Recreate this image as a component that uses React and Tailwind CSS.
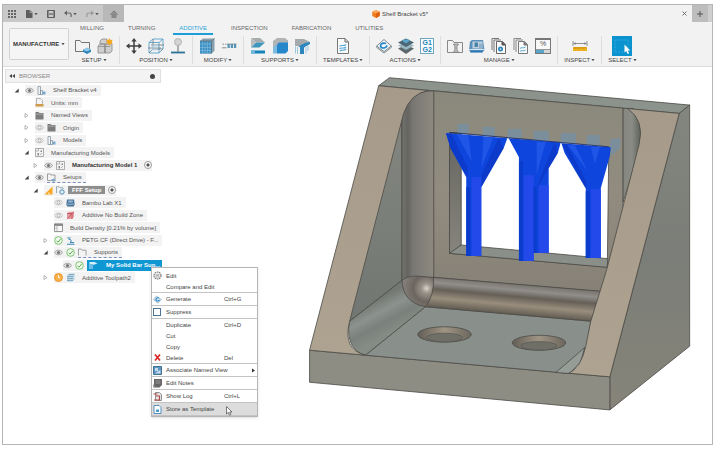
import { useState } from 'react';

const BLUE = '#2a86bd';
const GRAY = '#737373';

/* ---------- small helpers ---------- */

const Svg = ({ size = 'size-4', box = 16, children }) => (
  <svg viewBox={`0 0 ${box} ${box}`} className={`${size} shrink-0`} fill="none" aria-hidden="true">
    {children}
  </svg>
);

const Caret = ({ className = '' }) => (
  <svg viewBox="0 0 4 4" className={`size-1 shrink-0 ${className}`} aria-hidden="true">
    <path d="M0.4 1h3.2L2 3.2z" fill="#555" />
  </svg>
);

/* ---------- toolbar icons ---------- */

const toolIcons = {
  setup: (
    <>
      <path d="M.5 13.500V2.500h4.500l1.500 2h8v9z" stroke={GRAY} />
      <path d="M8 11.500l4-2 4 2-4 2.200z" fill="#8cc6ea" />
      <path d="M8 11.500v2.200l4 2.300 4-2.300v-2.200l-4 2.200z" fill={BLUE} />
    </>
  ),
  component: (
    <>
      <path d="M1 8l2-2h5v9H1zM8 8l2-2h5v7l-2 2H8zM3 3l2-2h5v5H3z" fill="#cfcfcf" stroke="#8c8c8c" strokeWidth=".8" />
      <path d="M1 8.500h12M8 6v9" stroke="#8c8c8c" strokeWidth=".8" />
      <path d="M12.500 0l1 2 2.200-.3-1 2 1.200 1.800-2.200.2-1.200 2-1.200-2-2.200-.2 1.200-1.800-1-2 2.200.3z" fill="#f6a81c" />
    </>
  ),
  move: (
    <>
      <path d="M8 2v12M2 8h12" stroke="#3f3f3f" strokeWidth="1.500" />
      <path d="M8 0l2.700 3.500H5.300zM8 16l2.700-3.500H5.300zM0 8l3.500-2.700v5.400zM16 8l-3.500-2.700v5.400z" fill="#3f3f3f" />
    </>
  ),
  box: (
    <>
      <path d="M1 4.500L5 1h10v10l-4 4H1zM1 4.500h10V15M11 4.500L15 1" stroke="#5aa2cc" strokeWidth=".9" />
      <path d="M5 1v10h10M5 11l-4 4M0 10h13M3 7h13" stroke="#6b7880" strokeWidth=".8" />
      <path d="M3.500 6.500h6v6h-6z" fill="#b5d6e8" fillOpacity=".6" />
    </>
  ),
  probe: (
    <>
      <circle cx="8" cy="4" r="3.500" fill="#d4d4d4" stroke="#a5a5a5" strokeWidth=".7" />
      <path d="M8 7.500V14" stroke="#888" strokeWidth="1.300" />
      <path d="M1 14.500h14" stroke="#2f7396" strokeWidth="1.800" />
    </>
  ),
  lattice: (
    <>
      <path d="M1 3l3-2.500h11.500V13l-3 2.500H1z" fill="#88a0ae" />
      <path d="M1 3h11.500v12.500H1z" fill="#3d8fc4" />
      <path d="M3.500 3v12.500M6 3v12.500M8.500 3v12.500M11 3v12.500M1 6h11.500M1 9.500h11.500M1 12.500h11.500" stroke="#8fc4e3" strokeWidth=".5" />
      <path d="M12.500 3v12.500M12.500 3l3-2.500M1 3h11.500" stroke="#5b6f7b" strokeWidth=".8" />
    </>
  ),
  modify: (
    <>
      <path d="M1.500 6.200h4" stroke="#8d8d8d" strokeDasharray="1.500 1" />
      <path d="M1 9.800h4.500" stroke="#8d8d8d" />
      <path d="M6.500 6h2.300v4H6.500zM9.700 6H12v4H9.700zM12.900 6h2.300v4h-2.300z" fill="#5794b8" />
      <path d="M6 6h9.500" stroke="#688" strokeWidth=".7" />
    </>
  ),
  support1: (
    <>
      <path d="M1 0h9l5 4.500H6z" fill="#a7adaf" />
      <path d="M6 4.500h9L9.500 9.500H1z" fill="#3f96bd" />
      <path d="M1 9.500V0l5 4.500z" fill="#b9bdbe" />
      <path d="M1 12.500h14v3H1z" fill="#1484bd" />
      <path d="M1 12.500h4v3H1z" fill="#6fb7dc" />
    </>
  ),
  support2: (
    <>
      <path d="M1 3l4-3h8l3 2.500V6L5.500 8 1 11z" fill="#b1b4b5" />
      <path d="M5 6.500L7 4.500h9V13l-2.500 2.500H5z" fill="#2688cb" />
      <path d="M1 9l4-2.500v9H1z" fill="#7eb9df" />
    </>
  ),
  support3: (
    <>
      <path d="M1 1h9l6 3-5 4H1z" fill="#a4a9ab" />
      <path d="M4 8.500L11 5l5-1v2l-6 3.500V16H6V9z" fill="#2a86bd" />
      <path d="M1.500 8.500v7M3.500 9v7M12 9v6.500M14 8v5" stroke="#9cc7dd" />
    </>
  ),
  template: (
    <>
      <path d="M2.500.5h7.500L13.500 4v11.500h-11z" fill="#fafafa" stroke="#777" />
      <path d="M10 .5V4h3.500" stroke="#666" />
      <path d="M4.500 8.500c2-2.500 3.500.5 6.500-2M4.500 11c2-2.500 3.500.5 6.500-2M5 13c2-2 3.500.5 6-2" stroke="#51a8d8" strokeWidth="1.100" />
    </>
  ),
  generate: (
    <>
      <path d="M.7 8L8 1.500 15.300 8 8 13.500z" fill="#f3f7fa" stroke="#7d8a92" />
      <path d="M.7 8v1.500L8 15l7.300-5.500V8" stroke="#7d8a92" />
      <path d="M10 5.500c-4-1.500-7 2-4.500 4 2 1.200 5 0 5.500-2" stroke="#2386d0" strokeWidth="1.700" />
    </>
  ),
  simulate: (
    <>
      <path d="M0 10.500L8 7l8 3.500L8 16z" fill="#5d686d" />
      <path d="M0 7.500L8 4l8 3.500L8 12z" fill="#9ab6c3" />
      <path d="M0 4.500L8 .5l8 4L8 9z" fill="#4b6774" />
      <path d="M5 3.500l3 2 3-2v-2H5z" fill="#59a6cd" />
    </>
  ),
  manageTool: (
    <>
      <path d="M.5 14.500v-12h5l1.500 2h8.500v10z" stroke="#888" />
      <path d="M6.500 6h5L10 8.500v3l1.500 3h-5l1.300-3v-3z" fill="#b9bcbd" stroke="#777" strokeWidth=".7" />
    </>
  ),
  machine: (
    <>
      <path d="M1 3.500L3 2h11l1.500 10-2 2.500H1.500L0 12z" fill="#5b90bd" />
      <path d="M3.500 3.500h10v7h-10z" fill="#c3d2de" />
      <path d="M5.500 4.500h3.500V9H5.500z" fill="#4a83a8" />
      <path d="M10 5.500h3V10h-3z" fill="#8fb0c9" />
      <path d="M0 11.500h15.500" stroke="#dbe6ee" />
      <path d="M1.500 13.500h12" stroke="#2b78b8" strokeWidth="1.600" />
    </>
  ),
  docPost: (
    <>
      <path d="M1 12V.5h7M3 14V2h7" stroke="#777" />
      <path d="M5.500 3.500h6l3 3v9h-9z" fill="#fafafa" stroke="#666" />
      <path d="M11 3.500v3.500h3.500" fill="#555" stroke="#555" />
      <circle cx="9.500" cy="11" r="2.500" fill={BLUE} />
      <circle cx="9.500" cy="11" r=".8" fill="#fff" />
    </>
  ),
  docTemplate: (
    <>
      <path d="M1 12V.5h7M3 14V2h7" stroke="#888" />
      <path d="M5.500 3.500h6l3 3v9h-9z" fill="#fafafa" stroke="#777" />
      <path d="M11 3.500v3.500h3.500" fill="#777" stroke="#777" />
      <path d="M7 10.500c1.500-2 3 .5 5.500-1.500M7 13.500c1.500-2 3 .5 5.500-1.500" stroke="#51a8d8" />
    </>
  ),
  inspect: (
    <>
      <path d="M1 3v5M15 3v5M2 5.500h12" stroke="#777" strokeWidth=".8" />
      <path d="M1.500 5.500l2-1.300v2.600zM14.500 5.500l-2-1.300v2.600z" fill="#666" />
      <path d="M1 9h14v4H1z" fill="#eeb01f" />
      <path d="M3 9v2M5 9v1.500M7 9v2M9 9v1.500M11 9v2M13 9v1.500" stroke="#a77400" strokeWidth=".6" />
    </>
  ),
};

const Tool = ({ name }) => {
  if (name === 'gcode') {
    return (
      <button aria-label="G-code" className="flex h-4 w-[14px] flex-col items-center justify-center border border-[#70a5c0] bg-[#f7fbfd] text-[7px] font-bold leading-[7px] text-[#2386b9]">
        <span>G1</span>
        <span>G2</span>
      </button>
    );
  }
  if (name === 'percent') {
    return (
      <button aria-label="Feed settings" className="flex h-4 w-4 flex-col items-center border border-t-2 border-[#777] bg-[#f8f8f8] text-[7px] leading-[8px] text-[#555]">
        <span className="flex-1">%</span>
        <span className="h-[4px] w-full border-t border-[#999] bg-linear-to-r from-[#57a4cc] from-60% to-[#d5d5d5] to-60%" />
      </button>
    );
  }
  if (name === 'select') {
    return (
      <button aria-label="Select" className="h-5 w-5">
        <svg viewBox="0 0 20 20" className="size-5">
          <path d="M0 0h20v20H0z" fill="#0b93d0" />
          <path d="M3 4h13M3 4v12M16 4v8M3 16h8" stroke="#3eaedd" strokeWidth=".7" strokeDasharray="2 1" fill="none" />
          <path d="M12.500 8.500v8l1.800-1.600 1.300 3 1.500-.7-1.300-2.800h2.400z" fill="#fff" />
        </svg>
      </button>
    );
  }
  return (
    <button aria-label={name} className="size-4">
      <Svg>{toolIcons[name]}</Svg>
    </button>
  );
};

const groups = [
  { label: 'SETUP', tools: ['setup', 'component'] },
  { label: 'POSITION', tools: ['move', 'box', 'probe'] },
  { label: 'MODIFY', tools: ['lattice', 'modify'] },
  { label: 'SUPPORTS', tools: ['support1', 'support2', 'support3'] },
  { label: 'TEMPLATES', tools: ['template'] },
  { label: 'ACTIONS', tools: ['generate', 'simulate', 'gcode'] },
  { label: 'MANAGE', tools: ['manageTool', 'machine', 'docPost', 'docTemplate', 'percent'] },
  { label: 'INSPECT', tools: ['inspect'] },
  { label: 'SELECT', tools: ['select'] },
];

const tabs = ['MILLING', 'TURNING', 'ADDITIVE', 'INSPECTION', 'FABRICATION', 'UTILITIES'];

/* ---------- title bar ---------- */

const TitleBar = () => (
  <header className="flex h-[17px] items-stretch bg-[#f2f2f2]">
    <div className="flex items-center gap-[9px] bg-[#c9c9c9] pl-[5px] pr-[4px]">
      <button aria-label="Data panel">
        <Svg size="size-2" box={8}>
          <path d="M0 0h2v2H0zM3 0h2v2H3zM6 0h2v2H6zM0 3h2v2H0zM3 3h2v2H3zM6 3h2v2H6zM0 6h2v2H0zM3 6h2v2H3zM6 6h2v2H6z" fill="#666" />
        </Svg>
      </button>
      <button aria-label="File" className="flex items-center gap-px">
        <Svg size="size-2" box={8}>
          <path d="M1 0h4l2.500 2.500V8H1z" fill="#5e5e5e" />
          <path d="M5 0v2.500h2.500" stroke="#c9c9c9" strokeWidth=".6" />
        </Svg>
        <Caret />
      </button>
      <button aria-label="Save">
        <Svg size="size-2" box={8}>
          <path d="M.5.5h7v7h-7z" fill="#8a8a8a" stroke="#5e5e5e" />
          <path d="M2 1h4v2H2zM2 5h4v2H2z" fill="#ccc" />
        </Svg>
      </button>
      <button aria-label="Undo" className="flex items-center gap-px">
        <Svg size="size-2" box={8}>
          <path d="M1.500 3H5c2 0 2.500 1.500 2 4" stroke="#666" strokeWidth="1.200" />
          <path d="M0 3l3-2.500v5z" fill="#666" />
        </Svg>
        <Caret />
      </button>
      <button aria-label="Redo" className="flex items-center gap-px">
        <Svg size="size-2" box={8}>
          <path d="M6.500 3H3C1 3 .5 4.500 1 7" stroke="#999" strokeWidth="1.200" />
          <path d="M8 3L5 .5v5z" fill="#999" />
        </Svg>
        <Caret />
      </button>
    </div>
    <button aria-label="Home" className="flex w-[21px] items-center justify-center bg-[#b8b8b8]">
      <Svg size="size-2" box={8}>
        <path d="M0 4.500L4 .5l4 4-.7.6L4 2 .7 5.100z" fill="#777" />
        <path d="M1.500 4.500L4 2.200l2.500 2.300V8h-5z" fill="#888" />
      </Svg>
    </button>
    <div className="flex flex-1 items-center justify-center gap-[2px] text-[#444]">
      <Svg size="size-2" box={8}>
        <path d="M4 0l3.700 1.800v4.300L4 8 .3 6.100V1.800z" fill="#f07a1a" />
        <path d="M4 0l3.700 1.800L4 3.600.3 1.800z" fill="#ffab5c" />
        <path d="M4 3.600l3.700-1.800v4.300L4 8z" fill="#e0600f" />
      </Svg>
      <h1>Shelf Bracket v5*</h1>
    </div>
    <button aria-label="Close" className="flex w-4 items-center justify-center">
      <Svg size="size-[5px]" box={5}>
        <path d="M.5.5l4 4M4.500.5l-4 4" stroke="#555" strokeWidth=".8" />
      </Svg>
    </button>
    <button aria-label="New tab" className="flex w-4 items-center justify-center bg-[#bdbdbd]">
      <Svg size="size-2" box={8}>
        <path d="M4 1v6M1 4h6" stroke="#555" />
      </Svg>
    </button>
    <div className="w-[4px] bg-[#cfcfcf]" />
  </header>
);

const Ribbon = () => {
  const [active, setActive] = useState('ADDITIVE');

  return (
    <div className="flex border-b border-[#dcdcdc] bg-[#f2f2f2]">
      <label className="relative my-[6px] ml-[6px] flex w-[60px] shrink-0 items-center rounded-[2px] border border-[#d2d2d2] bg-[#f5f5f5]">
        <select aria-label="Workspace" className="h-full w-full appearance-none pl-[3px] font-bold text-[#333]">
          <option>MANUFACTURE</option>
          <option>DESIGN</option>
        </select>
        <Caret className="pointer-events-none absolute right-[3px]" />
      </label>
      <div className="min-w-0 flex-1">
        <nav className="flex h-[13px] gap-3 pl-[5px]">
          {tabs.map((tab) => (
            <button
              key={tab}
              onClick={() => setActive(tab)}
              className={`border-b-2 px-[6px] ${active === tab ? 'border-[#1b9fd8] text-[#2aa5da]' : 'border-transparent text-[#666]'}`}
            >
              {tab}
            </button>
          ))}
        </nav>
        <div className="flex pb-[2px] pt-[1px]">
          {groups.map((group) => (
            <section key={group.label} className="flex flex-col items-center border-r border-[#dedede] px-[6px] last:border-0">
              <div className="flex h-5 items-center gap-[6px]">
                {group.tools.map((tool) => (
                  <Tool key={tool} name={tool} />
                ))}
              </div>
              <button className="flex h-2 items-center gap-px text-[#444]">
                {group.label}
                <Caret />
              </button>
            </section>
          ))}
        </div>
      </div>
    </div>
  );
};

/* ---------- browser tree ---------- */

const treeIcons = {
  eye: (
    <>
      <path d="M.3 4.500C2.500 1.500 6.500 1.500 8.700 4.500 6.500 7.500 2.500 7.500.3 4.500z" fill="#e6e6e6" stroke="#8a8a8a" strokeWidth=".8" />
      <circle cx="4.500" cy="4.500" r="1.600" fill="#777" />
    </>
  ),
  eyeOff: (
    <>
      <path d="M.3 4.500C2.500 1.500 6.500 1.500 8.700 4.500 6.500 7.500 2.500 7.500.3 4.500z" stroke="#b0b0b0" strokeWidth=".8" />
      <circle cx="4.500" cy="4.500" r="1.500" stroke="#a8a8a8" strokeWidth=".8" />
    </>
  ),
  part: (
    <>
      <path d="M1 .5h2.500v8H1zM3.500 4.500h2v4h-2z" fill="#eef3f7" stroke="#7d8b96" strokeWidth=".7" />
      <path d="M5.500 5.500h3v3h-3z" fill="#78a9cc" />
    </>
  ),
  units: (
    <>
      <path d="M1.500.5h4l2 2v4h-6z" fill="#f4f4f4" stroke="#999" strokeWidth=".7" />
      <path d="M.5 6h8v2.500h-8z" fill="#cf9a4c" />
    </>
  ),
  folder: (
    <>
      <path d="M.5 1h3l1 1h4v6.500h-8z" fill="#7c7c7c" />
      <path d="M.5 3.200h8" stroke="#b9b9b9" strokeWidth=".7" />
    </>
  ),
  mfg: (
    <>
      <path d="M.5.5h8v8h-8z" fill="#f4f4f4" stroke="#9a9a9a" strokeWidth=".8" />
      <path d="M2.500 5h1.500v2.500H2.500zM5.500 2.500h1.500V4H5.500z" fill="#888" />
      <path d="M.5 3h3V.5M5 7l2-2" stroke="#9a9a9a" strokeWidth=".7" />
    </>
  ),
  setupItem: (
    <>
      <path d="M.5 7.500V1h2.500l1 1h4v5.500z" stroke="#888" strokeWidth=".8" />
      <path d="M4.500 6.500l2-1 2 1v1.500l-2 .8-2-.8z" fill="#82aac8" />
    </>
  ),
  setupGear: (
    <>
      <path d="M.5 7V.800h2.500l1 1h3V3" stroke="#7e9aa8" strokeWidth=".8" />
      <circle cx="6" cy="6" r="2.200" stroke="#4f8fb5" strokeWidth="1" fill="#e2eef5" />
    </>
  ),
  warn: (
    <>
      <path d="M8.500.5v8h-8z" fill="#f7a823" />
      <path d="M4 6.500h2v2H4z" fill="#fbd38b" />
    </>
  ),
  printer: (
    <>
      <path d="M1 1.500h7l.7 5-1 2H1.300l-1-2z" fill="#44729c" />
      <path d="M2.200 2.500h4.600v2H2.200z" fill="#9bbbd5" />
      <path d="M.5 6.200h8" stroke="#c7d9e7" strokeWidth=".7" />
    </>
  ),
  zone: (
    <>
      <path d="M1 2.500L3 .800h5v5L6 8H1z" fill="#e39aa0" />
      <path d="M1 2.500h5V8M6 2.500l2-1.700M1.500 7.500l4-4.500" stroke="#c04550" strokeWidth=".8" />
    </>
  ),
  table: (
    <>
      <path d="M.5.800h8v7.700h-8z" fill="#f7f7f7" stroke="#808080" strokeWidth=".8" />
      <path d="M.5 2h8" stroke="#666" strokeWidth="1.400" />
      <path d="M3 2v6.500M.5 5H3" stroke="#999" strokeWidth=".6" />
    </>
  ),
  check: (
    <>
      <circle cx="4.500" cy="4.500" r="3.800" fill="#f3fbf1" stroke="#74bf66" strokeWidth=".9" />
      <path d="M2.500 4.700l1.500 1.500 2.800-3.400" stroke="#58ae49" strokeWidth="1" />
    </>
  ),
  print: (
    <>
      <path d="M1 1h4L4 3.500H2z" fill="#8ebad2" />
      <path d="M3 3.500c3 0 3 2 1 2.500M1 8.200h7.500M4 6.500h4" stroke="#3d87b5" strokeWidth="1" />
    </>
  ),
  openFolder: <path d="M.5 7.500V1h2.500l1 1.200h4v5.300" stroke="#8f8f8f" strokeWidth=".8" />,
  bar: (
    <>
      <path d="M.5 1h5l3 1.500L4 4v4H.5z" fill="#d8eefa" />
      <path d="M.5 3h3.500v5H.5z" fill="#6bbbe6" />
    </>
  ),
  clock: (
    <>
      <circle cx="4.500" cy="4.500" r="4" fill="#f7b04a" stroke="#ee9120" strokeWidth=".9" />
      <path d="M4.500 2.200v2.500h1.700" stroke="#fff" strokeWidth=".9" />
    </>
  ),
  toolpath: (
    <>
      <path d="M1 2.500L3 .5h5.500v6l-2 2H1z" fill="#b9d3e2" />
      <path d="M1 3.500h6M1 5.500h6M1 7.500h6M2.500 1.500h6" stroke="#6d9dba" strokeWidth=".7" />
    </>
  ),
};

const indents = ['pl-[11px]', 'pl-[21px]', 'pl-[30px]', 'pl-[40px]', 'pl-[49px]'];

const rows = [
  { level: 0, state: 'open', icons: ['eye', 'part'], label: 'Shelf Bracket v4' },
  { level: 1, icons: ['units'], label: 'Units: mm' },
  { level: 1, state: 'closed', icons: ['folder'], label: 'Named Views' },
  { level: 1, state: 'closed', icons: ['eyeOff', 'folder'], label: 'Origin' },
  { level: 1, state: 'closed', icons: ['eyeOff', 'part'], label: 'Models' },
  { level: 1, state: 'open', icons: ['mfg'], label: 'Manufacturing Models' },
  { level: 2, state: 'closed', icons: ['eye', 'mfg'], label: 'Manufacturing Model 1', kind: 'bold', radio: true },
  { level: 1, state: 'open', icons: ['eye', 'setupItem'], label: 'Setups', kind: 'dashed' },
  { level: 2, state: 'open', icons: ['warn', 'setupGear'], label: 'FFF Setup', kind: 'active', radio: true },
  { level: 3, icons: ['eyeOff', 'printer'], label: 'Bambu Lab X1' },
  { level: 3, icons: ['eyeOff', 'zone'], label: 'Additive No Build Zone' },
  { level: 3, icons: ['table'], label: 'Build Density [0.21% by volume]' },
  { level: 3, state: 'closed', icons: ['check', 'print'], label: 'PETG CF (Direct Drive) - F...' },
  { level: 3, state: 'open', icons: ['eye', 'check', 'openFolder'], label: 'Supports', kind: 'dashed' },
  { level: 4, icons: ['eye', 'check'], label: 'My Solid Bar Sup...', kind: 'selected' },
  { level: 3, state: 'closed', icons: ['clock', 'toolpath'], label: 'Additive Toolpath2' },
];

const labelStyles = {
  plain: 'px-1',
  bold: 'px-1 font-bold text-[#333]',
  dashed: 'px-1',
  active: 'bg-[#8e8e8e] px-1 font-bold text-white',
  selected: 'flex flex-1 items-center gap-2 self-stretch bg-[#0f97d4] px-[2px] font-bold text-white',
};

const TreeRow = ({ level, state, icons, label, kind = 'plain', radio }) => {
  const leading = kind === 'dashed' ? icons.slice(0, -1) : icons;

  return (
    <li className={`flex min-h-3 flex-1 items-center ${indents[level]}`}>
      <button aria-label={state ? `Toggle ${label}` : undefined} disabled={!state} className="w-[11px] shrink-0">
        {state && (
          <Svg size="size-[5px]" box={5}>
            {state === 'open' ? <path d="M4.700.5v4h-4z" fill="#444" /> : <path d="M1 .5l3 2-3 2z" stroke="#999" strokeWidth=".7" />}
          </Svg>
        )}
      </button>
      <div className={`flex h-[11px] items-center gap-[3px] bg-[#f3f3f3] ${kind === 'selected' ? 'flex-1' : ''}`}>
        {leading.map((icon) => (
          <Svg key={icon} size="size-[9px]" box={9}>{treeIcons[icon]}</Svg>
        ))}
        {kind === 'dashed' ? (
          <span className="flex h-[11px] items-center gap-[3px] border-b border-dashed border-[#7d8fc0]">
            <Svg size="size-[9px]" box={9}>{treeIcons[icons[icons.length - 1]]}</Svg>
            <span className={labelStyles.dashed}>{label}</span>
          </span>
        ) : (
          <span className={`whitespace-nowrap ${labelStyles[kind]}`}>
            {kind === 'selected' && <Svg size="size-[9px]" box={9}>{treeIcons.bar}</Svg>}
            {label}
          </span>
        )}
        {radio && (
          <input
            type="radio"
            name={label}
            aria-label={`Activate ${label}`}
            defaultChecked
            className="size-2 appearance-none rounded-full border border-[#999] bg-white checked:bg-[radial-gradient(#555_30%,#fff_45%)]"
          />
        )}
      </div>
    </li>
  );
};

/* ---------- context menu ---------- */

const menuIcons = {
  edit: (
    <>
      <circle cx="4.500" cy="4.500" r="3.500" stroke="#777" strokeWidth="1.200" strokeDasharray="1.600 .6" />
      <path d="M2.500 3.300h4M2.500 4.700h4M2.500 6h4" stroke="#888" strokeWidth=".7" />
    </>
  ),
  generate: (
    <>
      <path d="M.3 4.500L3.500 1l5 3.500L5 8.200z" fill="#d4e5f1" stroke="#84a2b7" strokeWidth=".6" />
      <path d="M6 3C3.500 2 2 4.500 3.500 5.700c1.200.6 2.500 0 3-1" stroke="#2a86cf" strokeWidth="1.100" />
    </>
  ),
  remove: <path d="M2 1.500l5 6M7 1.500l-5 6" stroke="#dc2828" strokeWidth="1.700" />,
  view: (
    <>
      <path d="M.5.5h8v8h-8z" fill="#5c95c4" stroke="#44718f" />
      <path d="M2 2h3v3H2zM4.500 5.500l3-1.500v3.500H2z" fill="#c7dcec" />
    </>
  ),
  notes: (
    <>
      <path d="M1 0h8v6L6.500 8.500H1z" fill="#676767" />
      <path d="M2.500 2h5M2.500 4h5" stroke="#aaa" strokeWidth=".7" />
      <path d="M0 5l3 3.500H0z" fill="#999" />
    </>
  ),
  log: (
    <>
      <path d="M2.500.5h4l2 2v6h-6z" fill="#e5e5e5" stroke="#777" strokeWidth=".8" />
      <path d="M.5 2h4M3 4h3.500v4H1" stroke="#b14848" strokeWidth="1.100" />
    </>
  ),
  store: (
    <>
      <path d="M1 .5h5l2 2v6H1z" fill="#fff" stroke="#4485b5" strokeWidth=".9" />
      <path d="M3 4.500h3v2.500H3z" fill="#4b9bd0" />
    </>
  ),
};

const menu = [
  [{ icon: 'edit', label: 'Edit' }, { label: 'Compare and Edit' }],
  [{ icon: 'generate', label: 'Generate', keys: 'Ctrl+G' }],
  [{ checkbox: true, label: 'Suppress' }],
  [{ label: 'Duplicate', keys: 'Ctrl+D' }, { label: 'Cut' }, { label: 'Copy' }, { icon: 'remove', label: 'Delete', keys: 'Del' }],
  [{ icon: 'view', label: 'Associate Named View', sub: true }],
  [{ icon: 'notes', label: 'Edit Notes' }],
  [{ icon: 'log', label: 'Show Log', keys: 'Ctrl+L' }],
  [{ icon: 'store', label: 'Store as Template', hover: true }],
];

const ContextMenu = () => (
  <div className="absolute left-[148px] top-[200px] z-10 w-[107px] border border-[#b5b5b5] bg-white pt-[2px] text-[#444] shadow-sm">
    {menu.map((section) => (
      <div key={section[0].label} className="border-b border-[#c4c4c4] last:border-0">
        {section.map((item) => {
          const Row = item.checkbox ? 'label' : 'button';
          return (
            <Row
              key={item.label}
              className={`flex w-full items-center gap-1 px-[1px] text-left ${section.length > 1 ? 'h-[11px]' : 'h-3'} ${item.hover ? 'bg-[#dcdcdc]' : ''}`}
            >
              <span className="flex w-[9px] shrink-0">
                {item.icon && <Svg size="size-[9px]" box={9}>{menuIcons[item.icon]}</Svg>}
                {item.checkbox && <input type="checkbox" className="size-2 appearance-none border border-[#4a7396] bg-white checked:bg-[#4a7396]" />}
              </span>
              <span className="flex-1 whitespace-nowrap">{item.label}</span>
              {item.keys && <span className="w-8">{item.keys}</span>}
              {item.sub && (
                <Svg size="size-[5px]" box={5}>
                  <path d="M1 .5l3 2-3 2z" fill="#333" />
                </Svg>
              )}
            </Row>
          );
        })}
      </div>
    ))}
    <svg viewBox="0 0 8 10" className="absolute bottom-0 right-6 h-[10px] w-2" aria-hidden="true">
      <path d="M1.500.5v7.500l1.800-1.600L4.500 9.200l1.300-.6-1.200-2.600h2.400z" fill="#fff" stroke="#444" strokeWidth=".7" />
    </svg>
  </div>
);

/* ---------- 3D viewport ---------- */

const trees = [
  'M445.3 134L506.700 139 503 149 480.700 188V256.700H465.700V178L450 149Z',
  'M508 139L560 143.300 557 154 548 169V253.700H533V261.700H518.300V158Z',
  'M560.7 144L610 148 609 157 600 189V258.700H585V189.300L564 154Z',
];

const Bracket = () => (
  <svg viewBox="162 68 549 376" className="block w-full" role="img" aria-label="Shelf bracket model with supports">
    <defs>
      <linearGradient id="tan" x1="0" y1="0" x2="0" y2="1">
        <stop offset="0" stopColor="#a69b8a" />
        <stop offset="1" stopColor="#aea391" />
      </linearGradient>
      <linearGradient id="wall" x1="0" y1="0" x2="0" y2="1">
        <stop offset="0" stopColor="#8a887c" />
        <stop offset=".5" stopColor="#928c80" />
        <stop offset="1" stopColor="#868176" />
      </linearGradient>
      <linearGradient id="inner" x1="0" y1="0" x2="0" y2="1">
        <stop offset="0" stopColor="#848780" />
        <stop offset="1" stopColor="#727672" />
      </linearGradient>
      <linearGradient id="vert" gradientUnits="userSpaceOnUse" x1="401" y1="0" x2="433" y2="0">
        <stop offset="0" stopColor="#74756f" />
        <stop offset=".2" stopColor="#656461" />
        <stop offset=".35" stopColor="#797773" />
        <stop offset="1" stopColor="#8d897f" />
      </linearGradient>
      <linearGradient id="vertRight" gradientUnits="userSpaceOnUse" x1="622" y1="0" x2="640" y2="0">
        <stop offset="0" stopColor="#86867e" />
        <stop offset=".5" stopColor="#898c85" />
        <stop offset="1" stopColor="#5f605b" />
      </linearGradient>
      <linearGradient id="roll" gradientUnits="userSpaceOnUse" x1="510" y1="284" x2="507.300" y2="314">
        <stop offset="0" stopColor="#77736d" />
        <stop offset=".2" stopColor="#918e8b" />
        <stop offset=".42" stopColor="#655f57" />
        <stop offset=".7" stopColor="#998e7d" />
        <stop offset="1" stopColor="#645e54" />
      </linearGradient>
      <linearGradient id="sideRoll" gradientUnits="userSpaceOnUse" x1="375" y1="301" x2="392" y2="333">
        <stop offset="0" stopColor="#747873" />
        <stop offset=".35" stopColor="#8c938e" />
        <stop offset=".65" stopColor="#7a807b" />
        <stop offset="1" stopColor="#858b85" />
      </linearGradient>
      <radialGradient id="corner" gradientUnits="userSpaceOnUse" cx="426" cy="289" r="24">
        <stop offset="0" stopColor="#d9d4ca" />
        <stop offset=".2" stopColor="#9b938a" />
        <stop offset=".55" stopColor="#6c655f" />
        <stop offset="1" stopColor="#85817c" />
      </radialGradient>
      <linearGradient id="side" x1="0" y1="0" x2="0" y2="1">
        <stop offset="0" stopColor="#83867f" />
        <stop offset=".5" stopColor="#7b7e78" />
        <stop offset="1" stopColor="#868479" />
      </linearGradient>
      <linearGradient id="hole" x1="0" y1="0" x2="1" y2="0">
        <stop offset="0" stopColor="#625e56" />
        <stop offset=".5" stopColor="#a09584" />
        <stop offset="1" stopColor="#6b665d" />
      </linearGradient>
      <linearGradient id="reveal" x1="0" y1="0" x2="0" y2="1">
        <stop offset="0" stopColor="#66655f" />
        <stop offset="1" stopColor="#85857d" />
      </linearGradient>
    </defs>

    <g stroke="#4b4a46" strokeWidth=".8" strokeLinejoin="round">
      {/* outer shell */}
      <path d="M378.300 86.700L389 78.700 688.700 106 678.300 114.300Z" fill="#8c938d" />
      <path d="M678.300 114.300L688.700 106V346.700L609 410.300V377.300Z" fill="url(#side)" />
      <path d="M309.300 350.700L609 377.300V410.300L309.300 382.700Z" fill="#8e8d83" />

      {/* interior walls */}
      <path d="M433 91.800L622.300 109V294L433 278Z" fill="url(#wall)" />
      <path d="M401 116L401.500 281 348 323 362 268Z" fill="url(#inner)" />
      <path d="M433.300 92H426Q408 94 401.500 118V281L433.300 278Z" fill="url(#vert)" />
      <path d="M622.300 109.300H632L641 125 640 146 622.300 203Z" fill="url(#vertRight)" />

      {/* floor */}
      <path d="M365 355.700L425 307.300 590 321.700 586 350 570 374Z" fill="#89908b" />
      <path d="M433 278L602 292 590 321.700 425 307.300Z" fill="url(#roll)" />
      <path d="M349 322L401.700 281 425 307.300 365 355.700Q345 350 349 322Z" fill="url(#sideRoll)" />
      <path d="M401.700 281Q406 277 415 276.700L433 278Q434 296 425 307.300 402 303 401.700 281Z" fill="url(#corner)" />
      <path d="M555 373L584 348 580 362 569 374Z" fill="#969d97" />

      {/* screw holes */}
      <ellipse cx="444" cy="335" rx="26.700" ry="7.700" fill="url(#hole)" />
      <ellipse cx="444" cy="338" rx="18" ry="4.300" fill="#6f6f68" strokeWidth=".5" />
      <ellipse cx="538.300" cy="343.300" rx="26.700" ry="7.500" fill="url(#hole)" />
      <ellipse cx="538.300" cy="346.300" rx="18" ry="4.200" fill="#6f6f68" strokeWidth=".5" />

      {/* window */}
      <path d="M449 133.300L608 147.700 606.500 267.700 449 254Z" fill="#fff" />
      <path d="M449 133.300L460.700 134.400V245.700L449 254Z" fill="url(#reveal)" />
      <path d="M449 254L460.700 245.700 607 259.300 606.300 268Z" fill="#8a8f89" />

      {/* side flanges */}
      <path d="M378.300 86.700L428.300 91.500Q410 94 403 115L349.300 321.700Q342 350 365 355.700L309.300 350.700Z" fill="url(#tan)" />
      <path d="M626.700 109.500L678.300 114.300 609 377.300 568 373.700Q580 369 585 346.700L590 321.700 606 270 638.300 145Q644 121 626.700 109.500Z" fill="url(#tan)" />
    </g>

    {/* support tips showing through the wall */}
    <path
      d="M457 125h11v9h-11zM482 128h12v9h-12zM507 130h14v9h-14zM533 132h15v10h-15zM560 134h15v10h-15zM586 136h13v10h-13zM609 140l11-1-1 10-9 8z"
      fill="#6b91b5"
      fillOpacity=".55"
    />

    {/* supports */}
    {trees.map((d) => (
      <path key={d} d={d} fill="#0e45dc" />
    ))}
    <path d="M456 135L468 136 471 162ZM483 138L493 138 481 168ZM536 142L545 143 536 175ZM567 146L574 146 587 172ZM590 147L599 148 594 165Z" fill="#2f64f2" fillOpacity=".55" />
    <path d="M445.300 134L451 135 467 168V178L450 149ZM503 149L480.700 188V176L498 139ZM557 154L548 169 536 189 547 160 554 143ZM561 144L566 145 586 183 585 189Z" fill="#0a2fb5" fillOpacity=".45" />
    <path d="M471 178h9.700v78.700H471zM523 176h10v85.700h-10zM538 186h10v67.700h-10zM590 190h10v68.700h-10z" fill="#2449ea" />
    <path d="M465.700 188h4v68.700h-4zM518.300 162h4v99.700h-4zM533 188h3v65.700h-3zM585 192h4v66.700h-4z" fill="#0b3ccc" />
    <path d="M449 133.300L608 147.700" stroke="#1a2c6e" strokeWidth=".7" />
  </svg>
);

export default function App() {
  return (
    <div className="flex min-h-screen flex-col bg-white pb-[6px] pl-[2px] pr-[7px] pt-[4px] text-[6px] leading-[8px] text-[#555] [font-family:'Liberation_Sans',Arial,sans-serif]">
      <div className="flex flex-1 flex-col border border-[#b5b5b5]">
        <TitleBar />
        <Ribbon />
        <main className="relative flex flex-1 items-start">
          <aside className="w-[159px] shrink-0 pl-[2px] pr-px pt-[2px]">
            <div className="flex h-[14px] items-center justify-between border border-[#e0e0e0] bg-[#f3f3f3] pl-[3px] pr-[5px] text-[#888]">
              <h2 className="flex items-center gap-1">
                <Svg size="size-[6px]" box={6}>
                  <path d="M3 1v4L.3 3zM6 1v4L3.300 3z" fill="#444" />
                </Svg>
                BROWSER
              </h2>
              <button aria-label="Browser options" className="size-[5px] rounded-full bg-[#444]" />
            </div>
            <ul className="-ml-[2px] mt-px flex h-[200px] flex-col">
              {rows.map((row) => (
                <TreeRow key={row.label} {...row} />
              ))}
            </ul>
          </aside>
          <div className="min-w-0 flex-1">
            <Bracket />
          </div>
          <ContextMenu />
        </main>
      </div>
    </div>
  );
}
